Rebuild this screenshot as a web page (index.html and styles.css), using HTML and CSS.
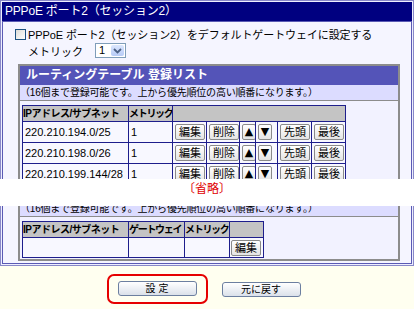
FILE: index.html
```html
<!DOCTYPE html>
<html lang="ja">
  <head>
    <meta charset="UTF-8" />
    <meta name="viewport" content="width=device-width, initial-scale=1.0" />
    <title>PPPoE ポート2（セッション2）</title>
    <link rel="stylesheet" href="styles.css">
  </head>
  <body>
    <div class="frame frame-top">
      <div class="frame-title">PPPoE ポート2（セッション2）</div>
      <div class="frame-body">
        <div class="check-line">
          <span class="checkbox"></span>PPPoE ポート2（セッション2）をデフォルトゲートウェイに設定する
        </div>
        <div class="metric-line">
          メトリック
          <span class="select">
            <span class="select-value">1</span>
            <span class="select-arrow">
              <svg width="9" height="6" viewBox="0 0 9 6"><path d="M1 1 L4.5 4.5 L8 1" fill="none" stroke="#4d6185" stroke-width="1.8"/></svg>
            </span>
          </span>
        </div>
        <div class="panel">
          <div class="panel-head">ルーティングテーブル 登録リスト</div>
          <div class="panel-note">（16個まで登録可能です。上から優先順位の高い順番になります。）</div>
          <div class="panel-body clip">
            <table class="route-table list">
              <colgroup>
                <col class="c-ip"><col class="c-metric"><col class="c-btn"><col class="c-btn2"><col class="c-up"><col class="c-down"><col class="c-btn"><col class="c-btn">
              </colgroup>
              <tr>
                <th class="th-ip">IPアドレス/サブネット</th>
                <th>メトリック</th>
                <th colspan="6"></th>
              </tr>
              <tr>
                <td>220.210.194.0/25</td>
                <td>1</td>
                <td><button class="small-btn">編集</button></td>
                <td><button class="small-btn">削除</button></td>
                <td><button class="small-btn arrow">▲</button></td>
                <td><button class="small-btn arrow">▼</button></td>
                <td><button class="small-btn">先頭</button></td>
                <td><button class="small-btn">最後</button></td>
              </tr>
              <tr>
                <td>220.210.198.0/26</td>
                <td>1</td>
                <td><button class="small-btn">編集</button></td>
                <td><button class="small-btn">削除</button></td>
                <td><button class="small-btn arrow">▲</button></td>
                <td><button class="small-btn arrow">▼</button></td>
                <td><button class="small-btn">先頭</button></td>
                <td><button class="small-btn">最後</button></td>
              </tr>
              <tr>
                <td>220.210.199.144/28</td>
                <td>1</td>
                <td><button class="small-btn">編集</button></td>
                <td><button class="small-btn">削除</button></td>
                <td><button class="small-btn arrow">▲</button></td>
                <td><button class="small-btn arrow">▼</button></td>
                <td><button class="small-btn">先頭</button></td>
                <td><button class="small-btn">最後</button></td>
              </tr>
            </table>
          </div>
        </div>
      </div>
    </div>

    <div class="cut">〔省略〕</div>

    <div class="frame frame-bottom">
      <div class="frame-body">
        <div class="panel">
          <div class="panel-note note-clip">
            <div class="note-text">（16個まで登録可能です。上から優先順位の高い順番になります。）</div>
          </div>
          <div class="panel-body">
            <table class="route-table add">
              <colgroup>
                <col class="c-ip"><col class="c-gw"><col class="c-metric2"><col class="c-btn">
              </colgroup>
              <tr>
                <th class="th-ip">IPアドレス/サブネット</th>
                <th>ゲートウェイ</th>
                <th>メトリック</th>
                <th></th>
              </tr>
              <tr class="input-row">
                <td></td>
                <td></td>
                <td></td>
                <td><button class="small-btn">編集</button></td>
              </tr>
            </table>
          </div>
        </div>
      </div>
    </div>

    <div class="actions">
      <span class="highlight"><button class="form-btn">設 定</button></span>
      <button class="form-btn">元に戻す</button>
    </div>
  </body>
</html>
```

FILE: styles.css
```css
body {
  margin: 0;
  padding: 0;
  font-family: "Liberation Sans", "Noto Sans CJK JP", sans-serif;
  background-color: #fffff0;
  color: #000;
  width: 414px;
}

.frame {
  width: 410px;
  border: 1px solid #8888c8;
  padding: 1px;
  background-color: #eeeeff;
}

.frame-top {
  border-bottom: none;
  padding-bottom: 0;
}

.frame-bottom {
  border-top: none;
  padding-top: 0;
}

.frame-title {
  height: 19px;
  line-height: 19px;
  background-color: #000080;
  color: white;
  font-size: 12px;
  padding-left: 3px;
  letter-spacing: -0.2px;
}

.frame-body {
  border: 1px solid #5a5ab4;
  background-color: #f5f5ff;
  padding: 4px 11px 2px 9px;
}

.frame-top .frame-body {
  border-bottom: none;
  padding-bottom: 0;
}

.frame-bottom .frame-body {
  border-top: none;
  padding-top: 0;
}

.check-line {
  display: flex;
  align-items: center;
  height: 16px;
  font-size: 11px;
  white-space: nowrap;
  letter-spacing: -0.1px;
}

.checkbox {
  width: 9px;
  height: 9px;
  border: 1px solid #1c5180;
  background: linear-gradient(135deg, #dcdcd7, #ffffff);
  margin: 0 2px 0 3px;
}

.metric-line {
  display: flex;
  align-items: center;
  height: 17px;
  font-size: 11px;
  padding-left: 16px;
}

.select {
  display: flex;
  align-items: center;
  width: 29px;
  height: 13px;
  border: 1px solid #7f9db9;
  background: white;
  margin-left: 12px;
}

.select-value {
  flex: 1;
  padding-left: 3px;
  font-size: 11px;
  line-height: 13px;
}

.select-arrow {
  display: flex;
  align-items: center;
  justify-content: center;
  width: 13px;
  height: 11px;
  margin-right: 1px;
  border-radius: 2px;
  background: linear-gradient(#dbe6fd, #b7cbf7);
}

.panel {
  margin: 5px 0 0 6px;
  border: 2px solid #8c8c8c;
  background-color: #f2f2ff;
}

.frame-top .panel {
  border-bottom: none;
}

.frame-bottom .panel {
  border-top: none;
  margin-top: 0;
}

.panel-head {
  height: 19px;
  line-height: 19px;
  background-color: #5454b8;
  color: white;
  font-size: 12px;
  font-weight: bold;
  padding-left: 6px;
}

.panel-note {
  height: 15px;
  line-height: 15px;
  background-color: #dcdcff;
  font-size: 10px;
  letter-spacing: -0.2px;
  border-bottom: 1px solid #8c8c8c;
  white-space: nowrap;
}

.note-clip {
  height: 10px;
  overflow: hidden;
}

.note-text {
  margin-top: -5px;
}

.panel-body {
  padding: 4px 2px 1px 2px;
}

.panel-body.clip {
  height: 73px;
  overflow: hidden;
}

.route-table {
  border-collapse: collapse;
  table-layout: fixed;
  font-size: 11px;
}

.route-table th,
.route-table td {
  border: 1px solid #1e1e8c;
  padding: 0 1px;
  white-space: nowrap;
  overflow: hidden;
  text-align: left;
}

.route-table th {
  background-color: #c4c4c4;
  height: 15px;
  line-height: 15px;
  padding: 0;
  font-size: 10px;
  font-weight: bold;
  letter-spacing: -1.3px;
}

.route-table th.th-ip {
  letter-spacing: -0.5px;
}

.route-table td {
  background-color: #f8f8ff;
  height: 20px;
}

.list td {
  padding-left: 2px;
}

.list { width: 323px; }
.add { width: 240px; }

.c-ip { width: 106px; }
.c-metric { width: 44px; }
.c-btn { width: 34px; }
.c-btn2 { width: 33px; }
.c-up { width: 16px; }
.c-down { width: 22px; }
.c-gw { width: 56px; }
.c-metric2 { width: 45px; }

.input-row td {
  height: 19px;
}

.small-btn {
  font-family: "Liberation Sans", "Noto Sans CJK JP", sans-serif;
  font-size: 11px;
  height: 16px;
  line-height: 14px;
  padding: 0 3px;
  border: 1px solid #8a8a8a;
  border-radius: 2px;
  background: linear-gradient(#ffffff, #e4e4e4);
  color: #000;
}

.small-btn.arrow {
  width: 14px;
  padding: 0;
  font-family: "DejaVu Sans", sans-serif;
  font-size: 11px;
}

.cut {
  height: 27px;
  background-color: white;
  text-align: center;
  color: #e00000;
  font-size: 12px;
  line-height: 20px;
}

.actions {
  display: flex;
  align-items: center;
  justify-content: center;
  gap: 14px;
  margin-top: 8px;
  padding-right: 7px;
}

.highlight {
  display: flex;
  padding: 5px 9px 6px 9px;
  border: 2px solid #e60000;
  border-radius: 7px;
}

.form-btn {
  width: 79px;
  height: 15px;
  padding: 0;
  font-family: "Liberation Sans", "Noto Sans CJK JP", sans-serif;
  font-size: 10px;
  line-height: 13px;
  border: 1px solid #6c7fa0;
  border-radius: 3px;
  background: linear-gradient(#ffffff, #dbe1ea);
  color: #000;
}
```
